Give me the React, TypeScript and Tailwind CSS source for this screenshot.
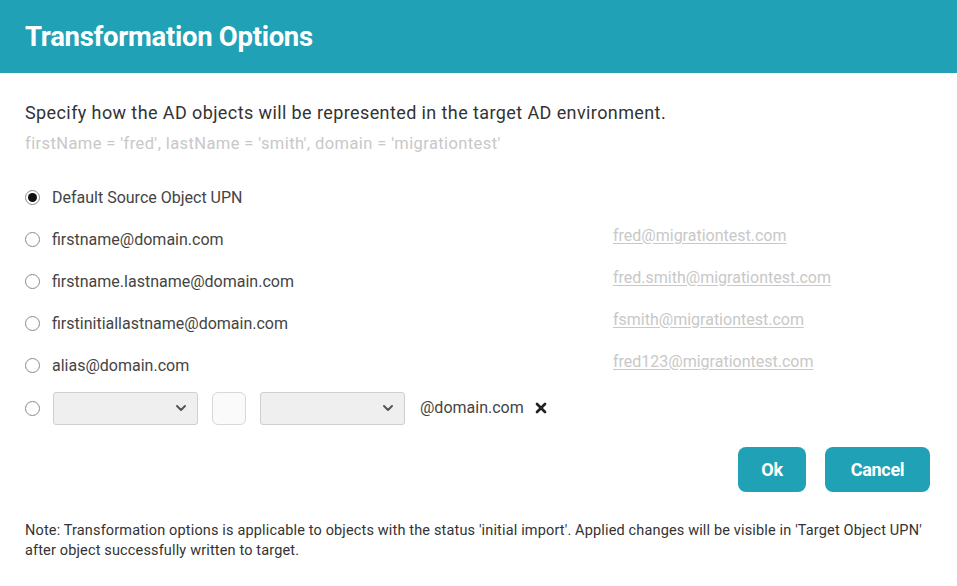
import { X, ChevronDown } from "lucide-react";

const options = [
  { label: "Default Source Object UPN", example: "" },
  { label: "firstname@domain.com", example: "fred@migrationtest.com" },
  { label: "firstname.lastname@domain.com", example: "fred.smith@migrationtest.com" },
  { label: "firstinitiallastname@domain.com", example: "fsmith@migrationtest.com" },
  { label: "alias@domain.com", example: "fred123@migrationtest.com" },
];

function Radio({ checked }: { checked?: boolean }) {
  return (
    <span className="flex h-[15px] w-[15px] shrink-0 items-center justify-center rounded-full border border-[#8a8a8a] bg-white">
      {checked && <span className="h-[9px] w-[9px] rounded-full bg-[#111]" />}
    </span>
  );
}

function Select() {
  return (
    <div className="flex h-[33px] w-[145px] items-center justify-end rounded-[3px] border border-[#cfcfcf] bg-[#efefef] pr-2">
      <ChevronDown size={16} strokeWidth={3} className="text-[#555]" />
    </div>
  );
}

export default function App() {
  return (
    <div className="flex h-[586px] w-[957px] flex-col overflow-hidden rounded-b-xl bg-white font-['Roboto',sans-serif]">
      <div className="flex h-[73px] shrink-0 items-center bg-[#20a1b6] px-[25px]">
        <h1 className="text-[27.5px] font-bold tracking-[-0.3px] text-white">Transformation Options</h1>
      </div>

      <div className="flex flex-1 flex-col px-[25px]">
        <p className="mt-[26px] text-[18px] tracking-[0.4px] text-[#333]">
          Specify how the AD objects will be represented in the target AD environment.
        </p>
        <p className="mt-[6px] text-[16.5px] tracking-[0.4px] text-[#c8c8c8]">
          firstName = 'fred', lastName = 'smith', domain = 'migrationtest'
        </p>

        <div className="mt-[20px] flex flex-col">
          {options.map((o, i) => (
            <div key={o.label} className="flex h-[42px] items-center">
              <div className="flex w-[588px] items-center gap-[12px]">
                <Radio checked={i === 0} />
                <span className="text-[16px] text-[#444]">{o.label}</span>
              </div>
              {o.example && (
                <span className="-mt-[8px] text-[16px] text-[#c8c8c8] underline underline-offset-2">
                  {o.example}
                </span>
              )}
            </div>
          ))}
          <div className="mt-[5px] flex items-center">
            <Radio />
            <div className="ml-[13px] flex items-center">
              <Select />
              <div className="ml-[14px] h-[33px] w-[34px] rounded-[6px] border border-[#d8d8d8] bg-[#fafafa]" />
              <div className="ml-[14px]">
                <Select />
              </div>
              <span className="ml-[15px] text-[16px] text-[#444]">@domain.com</span>
              <X size={16} strokeWidth={4} className="ml-[9px] text-[#222]" />
            </div>
          </div>
        </div>

        <div className="mt-[22px] flex justify-end gap-[19px] pr-[2px]">
          <button className="h-[45px] w-[68px] rounded-[8px] bg-[#20a1b6] text-[18px] font-bold tracking-[-0.3px] text-white">
            Ok
          </button>
          <button className="h-[45px] w-[105px] rounded-[8px] bg-[#20a1b6] text-[18px] font-bold tracking-[-0.3px] text-white">
            Cancel
          </button>
        </div>

        <p className="mt-[29px] text-[14.5px] leading-[20px] tracking-[0.15px] text-[#333]">
          Note: Transformation options is applicable to objects with the status 'initial import'. Applied changes will be visible in 'Target Object UPN'
          <br />
          after object successfully written to target.
        </p>
      </div>
    </div>
  );
}
